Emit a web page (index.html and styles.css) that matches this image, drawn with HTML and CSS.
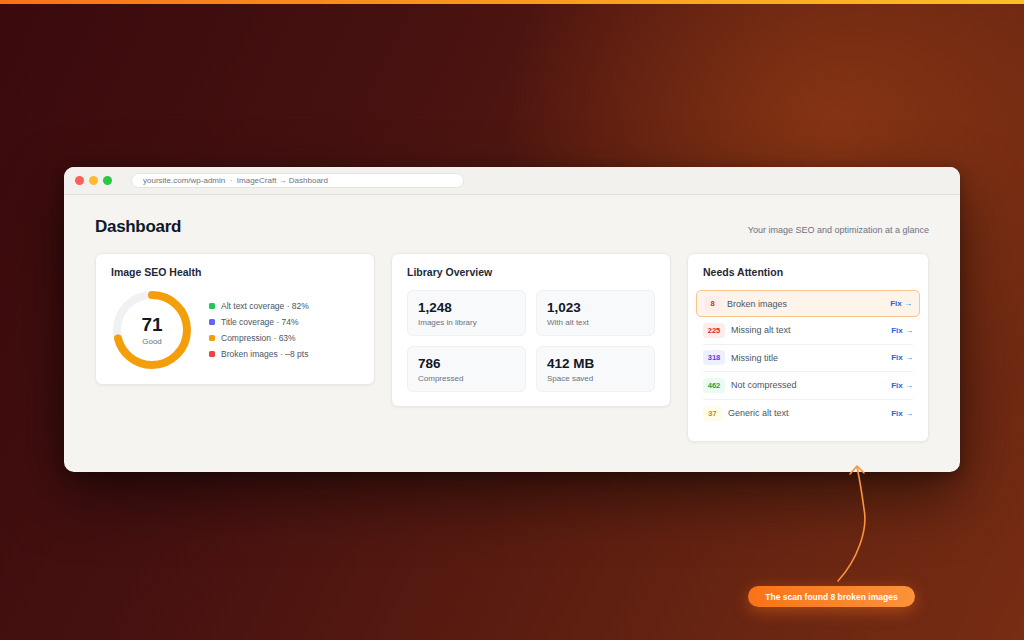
FILE: index.html
```html
<!DOCTYPE html>
<html>
<head>
<meta charset="utf-8">
<link rel="stylesheet" href="styles.css">
</head>
<body>
<div class="topline"></div>
<div class="stage">
  <div class="window">
    <div class="titlebar">
      <div class="lights"><span class="light red"></span><span class="light yellow"></span><span class="light green"></span></div>
      <div class="url">yoursite.com/wp-admin &nbsp;·&nbsp; ImageCraft → Dashboard</div>
    </div>
    <div class="content">
      <div class="header">
        <h1 class="title">Dashboard</h1>
        <div class="subtitle">Your image SEO and optimization at a glance</div>
      </div>
      <div class="cards">
        <div class="card health">
          <h2 class="card-title">Image SEO Health</h2>
          <div class="health-body">
            <div class="donut">
              <svg width="80" height="80" viewBox="0 0 80 80">
                <circle cx="40" cy="40" r="35" fill="none" stroke="#f0f1f3" stroke-width="8"/>
                <circle cx="40" cy="40" r="35" fill="none" stroke="#f59e0b" stroke-width="8" stroke-linecap="round" stroke-dasharray="156.1 219.9" transform="rotate(-90 40 40)"/>
              </svg>
              <div class="donut-label"><div class="score">71</div><div class="grade">Good</div></div>
            </div>
            <ul class="legend">
              <li><span class="dot d-green"></span>Alt text coverage · 82%</li>
              <li><span class="dot d-indigo"></span>Title coverage · 74%</li>
              <li><span class="dot d-orange"></span>Compression · 63%</li>
              <li><span class="dot d-red"></span>Broken images · –8 pts</li>
            </ul>
          </div>
        </div>
        <div class="card library">
          <h2 class="card-title">Library Overview</h2>
          <div class="stats">
            <div class="stat"><div class="num">1,248</div><div class="lbl">Images in library</div></div>
            <div class="stat"><div class="num">1,023</div><div class="lbl">With alt text</div></div>
            <div class="stat"><div class="num">786</div><div class="lbl">Compressed</div></div>
            <div class="stat"><div class="num">412 MB</div><div class="lbl">Space saved</div></div>
          </div>
        </div>
        <div class="card attention">
          <h2 class="card-title">Needs Attention</h2>
          <div class="rows">
            <div class="row hl"><span class="badge b-red b-single">8</span><span class="row-text">Broken images</span><span class="fix">Fix →</span></div>
            <div class="row"><span class="badge b-red">225</span><span class="row-text">Missing alt text</span><span class="fix">Fix →</span></div>
            <div class="row"><span class="badge b-indigo">318</span><span class="row-text">Missing title</span><span class="fix">Fix →</span></div>
            <div class="row"><span class="badge b-green">462</span><span class="row-text">Not compressed</span><span class="fix">Fix →</span></div>
            <div class="row last"><span class="badge b-amber b-short">37</span><span class="row-text">Generic alt text</span><span class="fix">Fix →</span></div>
          </div>
        </div>
      </div>
    </div>
  </div>
  <svg class="arrow" width="60" height="130" viewBox="0 0 60 130">
    <path d="M14 122 C 34 100, 44 70, 40 50 C 38 35, 36 22, 33 8" fill="none" stroke="#fb923c" stroke-width="1.6" stroke-linecap="round"/>
    <path d="M26 15 L33 7 L40 14" fill="none" stroke="#fb923c" stroke-width="1.6" stroke-linecap="round" stroke-linejoin="round"/>
  </svg>
  <div class="callout">The scan found 8 broken images</div>
</div>
</body>
</html>
```
FILE: styles.css
```css
* { box-sizing: border-box; }
html, body { margin: 0; padding: 0; }
body {
  width: 1024px;
  height: 640px;
  overflow: hidden;
  font-family: "Liberation Sans", Arial, Helvetica, sans-serif;
  background:
    radial-gradient(ellipse 330px 300px at 835px 125px, rgba(140,56,20,0.85), rgba(140,56,20,0) 100%),
    linear-gradient(115deg, #3a0a0c 0%, #451010 30%, #561a10 55%, #6a2612 80%, #772c13 100%);
  position: relative;
}
.topline {
  height: 4px;
  background: linear-gradient(90deg, #f97316, #fbbf24);
}
.stage {
  position: relative;
  height: 636px;
  padding-top: 163px;
}
.window {
  width: 896px;
  margin: 0 auto;
  height: 305px;
  background: #f5f4f1;
  border-radius: 10px;
  overflow: hidden;
  box-shadow: 0 24px 60px rgba(0,0,0,0.5), 0 4px 14px rgba(0,0,0,0.3);
}
.titlebar {
  height: 28px;
  display: flex;
  align-items: center;
  padding-left: 11px;
  border-bottom: 1px solid #e2e0dc;
  background: #f2f1ee;
}
.lights { display: flex; gap: 5px; }
.light { width: 9px; height: 9px; border-radius: 50%; display: block; }
.light.red { background: #fe5f57; }
.light.yellow { background: #febc2e; }
.light.green { background: #28c840; }
.url {
  margin-left: 19px;
  width: 333px;
  height: 15px;
  border-radius: 8px;
  background: #ffffff;
  border: 1px solid #e6e4e0;
  font-size: 8px;
  color: #70737a;
  line-height: 13px;
  padding-left: 11px;
  white-space: nowrap;
}
.content { padding: 21px 31px 0; }
.header {
  display: flex;
  justify-content: space-between;
  align-items: center;
  height: 22px;
  margin-bottom: 15px;
}
.title {
  margin: 0;
  font-size: 17px;
  font-weight: 700;
  color: #111827;
  letter-spacing: -0.3px;
}
.subtitle {
  font-size: 9px;
  color: #6b7280;
  margin-top: 5px;
}
.cards {
  display: grid;
  grid-template-columns: 280px 280px 242px;
  gap: 16px;
  align-items: start;
}
.card {
  background: #ffffff;
  border-radius: 7px;
  border: 1px solid #ebe9e5;
  box-shadow: 0 1px 3px rgba(0,0,0,0.05);
  padding: 11px 15px 14px;
}
.card-title {
  margin: 0 0 11px;
  font-size: 10.5px;
  line-height: 14px;
  font-weight: 700;
  color: #1f2937;
}
.health-body { display: flex; align-items: center; gap: 17px; padding-left: 1px; }
.donut { position: relative; width: 80px; height: 80px; }
.donut svg { display: block; }
.donut-label {
  position: absolute;
  inset: 0;
  display: flex;
  flex-direction: column;
  align-items: center;
  justify-content: center;
}
.score { font-size: 19px; font-weight: 700; color: #111827; line-height: 20px; }
.grade { font-size: 8px; color: #6b7280; margin-top: 2px; }
.legend { list-style: none; margin: 0; padding: 0; display: flex; flex-direction: column; gap: 5px; }
.legend li { font-size: 8.5px; color: #4b5563; display: flex; align-items: center; height: 11px; }
.dot { width: 6px; height: 6px; border-radius: 1.5px; margin-right: 6px; display: inline-block; }
.d-green { background: #22c55e; }
.d-indigo { background: #6366f1; }
.d-orange { background: #f59e0b; }
.d-red { background: #ef4444; }

.stats { display: grid; grid-template-columns: 1fr 1fr; gap: 10px; }
.stat {
  background: #f8f9fb;
  border: 1px solid #eef0f3;
  border-radius: 6px;
  height: 46px;
  padding: 9px 10px 0;
}
.num { font-size: 13.5px; font-weight: 700; color: #111827; line-height: 16px; }
.lbl { font-size: 8px; color: #6b7280; margin-top: 2px; }

.rows { display: flex; flex-direction: column; }
.row {
  display: flex;
  align-items: center;
  height: 27.5px;
  border-bottom: 1px solid #f0f0f2;
  font-size: 9px;
}
.row.last { border-bottom: none; }
.row.hl {
  margin: 0 -7px;
  padding: 0 7px 0 7px;
  background: #fff4ea;
  border: 1px solid #f7c58d;
  border-radius: 5px;
  height: 27px;
}
.badge {
  height: 15px;
  min-width: 22px;
  padding: 0 4px;
  border-radius: 4px;
  font-size: 7.5px;
  font-weight: 700;
  display: inline-flex;
  align-items: center;
  justify-content: center;
}
.b-single { min-width: 17px; }
.b-short { min-width: 19px; }
.b-red { background: #fdecec; color: #dc2626; }
.b-indigo { background: #eef0ff; color: #4f46e5; }
.b-green { background: #ecfbf1; color: #16a34a; }
.b-amber { background: #fefbe6; color: #ca8a04; }
.row-text { color: #4b5563; margin-left: 6px; flex: 1; }
.fix { color: #2563eb; font-weight: 700; font-size: 8px; }

.arrow {
  position: absolute;
  left: 824px;
  top: 455px;
}
.callout {
  position: absolute;
  left: 748px;
  top: 582px;
  width: 167px;
  height: 21px;
  border-radius: 11px;
  background: linear-gradient(90deg, #f97316, #fb923c);
  color: #ffffff;
  font-size: 8.5px;
  font-weight: 700;
  display: flex;
  align-items: center;
  justify-content: center;
  box-shadow: 0 4px 16px rgba(249,115,22,0.45);
}
```
